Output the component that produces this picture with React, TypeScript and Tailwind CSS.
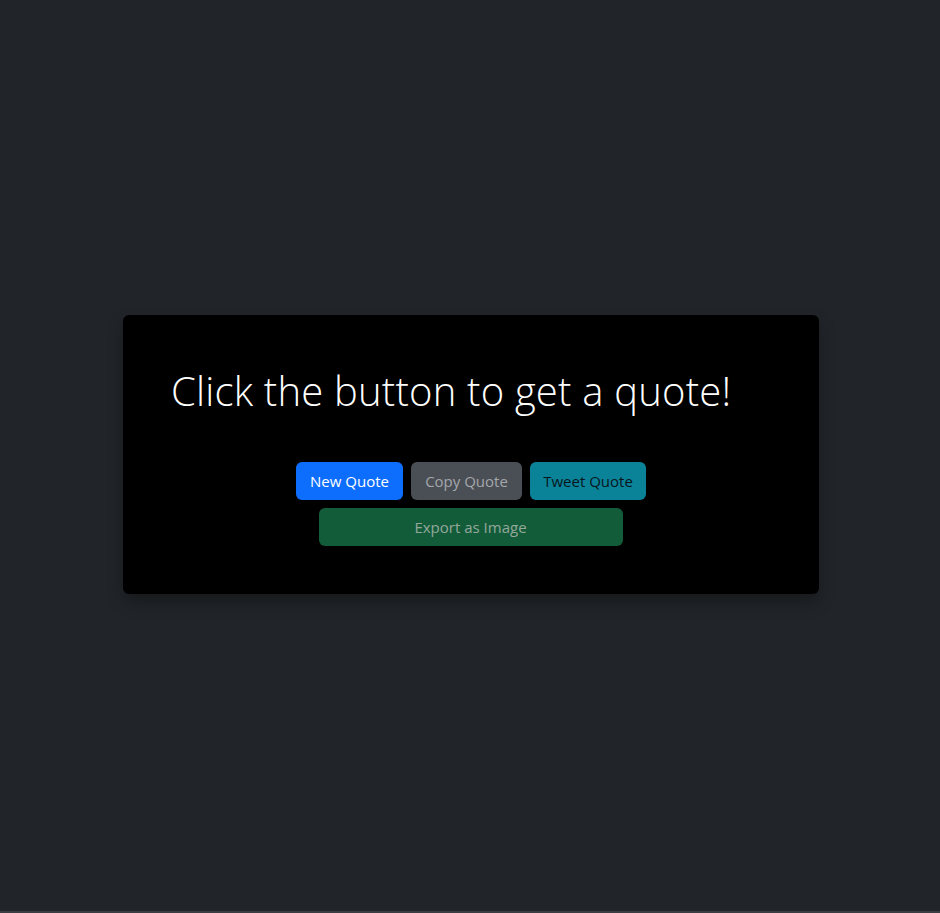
import React from "react";

export default function App() {
  return (
    <div className="w-[940px] h-[913px] bg-[#212529] flex flex-col" style={{ fontFamily: '"Segoe UI", "Open Sans", "Noto Sans", sans-serif' }}>
      <div className="flex-1 flex items-center justify-center">
        <div className="w-[696px] h-[279px] ml-[2px] mb-[2px] bg-black rounded-[6px] shadow-[0_8px_16px_rgba(0,0,0,0.3)] flex flex-col items-center pt-[52px]">
          <h1 className="text-[40px] leading-[48px] font-light text-white tracking-[0.2px] self-start ml-[48px]">Click the button to get a quote!</h1>
          <div className="mt-[47px] flex gap-[8px]">
            <button className="h-[38px] w-[107px] rounded-[6px] bg-[#0d6efd] text-white text-[15px]">New Quote</button>
            <button className="h-[38px] w-[111px] rounded-[6px] bg-[#4a4e55] text-[#a4a7ab] text-[15px]">Copy Quote</button>
            <button className="h-[38px] w-[116px] rounded-[6px] bg-[#0a8399] text-[#08161c] text-[15px]">Tweet Quote</button>
          </div>
          <button className="mt-[8px] h-[38px] w-[304px] rounded-[6px] bg-[#135c3a] text-[#93a89b] text-[15px] mr-[1px]">Export as Image</button>
        </div>
      </div>
      <div className="h-[2px] bg-[#3a3d41]" />
    </div>
  );
}
